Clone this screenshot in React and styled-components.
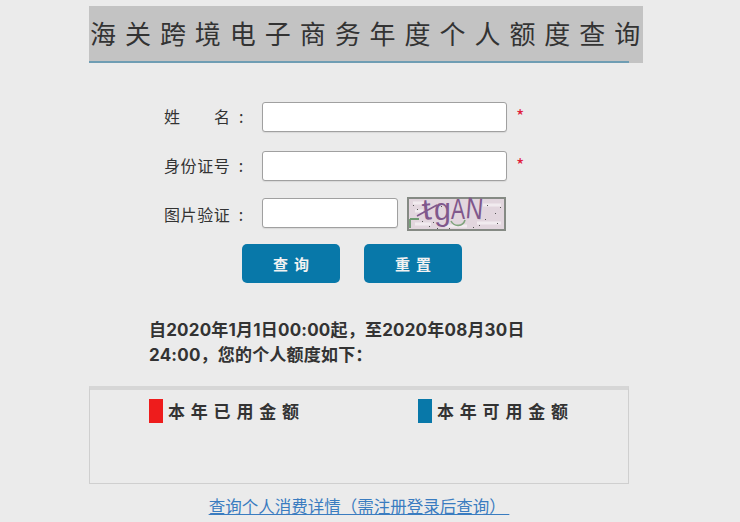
import React from 'react';
import styled, {createGlobalStyle} from 'styled-components';

const GlobalStyle = createGlobalStyle`
  html, body {
    margin: 0;
    padding: 0;
    height: 100%;
    overflow: hidden;
    background: #ebebeb;
    font-family: "Noto Sans CJK SC", "Liberation Sans", sans-serif;
  }
`;

const Page = styled.div`
  width: 540px;
  margin-left: 89px;
  padding-top: 6px;
  isolation: isolate;
`;

const Header = styled.div`
  width: 540px;
  height: 56.5px;
  border-bottom: 2px solid #6f9db3;
  box-sizing: border-box;
`;

const Title = styled.h1`
  width: 554px;
  height: 56.5px;
  margin: 0;
  padding-left: 1px;
  box-sizing: border-box;
  background: #c3c3c3;
  color: #333;
  font-size: 26px;
  font-weight: 400;
  line-height: 54px;
  letter-spacing: 8.95px;
  white-space: nowrap;
  position: relative;
  z-index: -1;
`;

const Form = styled.form`
  display: flex;
  flex-direction: column;
  gap: 19px;
  margin-top: 39.5px;
  padding-left: 75px;
`;

const Row = styled.div`
  display: flex;
  align-items: center;
  height: 30px;
  &:nth-of-type(3) {
    margin-top: -2px;
  }
`;

const Label = styled.label`
  width: 98px;
  display: flex;
  justify-content: ${p => (p.$spread ? 'space-between' : 'flex-start')};
  margin-top: ${p => p.$top ?? -2}px;
  padding-right: 18px;
  box-sizing: border-box;
  color: #333;
  font-size: 16px;
  letter-spacing: 0.6px;
  white-space: pre;
`;

const Input = styled.input`
  width: ${p => p.$w}px;
  height: 30px;
  box-sizing: border-box;
  padding: 0 8px;
  background: #fff;
  border: 1px solid #a0a0a0;
  border-radius: 3px;
  outline: none;
  box-shadow: 0 1px 1px rgba(0, 0, 0, 0.08);
`;

const Star = styled.span`
  margin: -5px 0 0 9px;
  color: #e0203c;
  font-size: 18px;
`;

const Captcha = styled.svg`
  width: 99px;
  height: 34px;
  margin: 2px 0 0 9px;
  display: block;
  overflow: visible;
`;

const Buttons = styled.div`
  display: flex;
  gap: 24px;
  margin: -3px 0 0 78px;
`;

const Button = styled.button`
  width: 98px;
  height: 39px;
  padding: 0 0 0 6px;
  border: none;
  border-radius: 5px;
  background: #0878a9;
  color: #f2f2f2;
  font-family: inherit;
  font-size: 15px;
  font-weight: 700;
  letter-spacing: 6px;
  cursor: pointer;
`;

const Notice = styled.p`
  width: 400px;
  margin: 35px 0 0 60px;
  color: #333;
  font-family: Inter, "Noto Sans CJK SC", sans-serif;
  font-size: 17px;
  font-weight: 700;
  line-height: 25px;
  letter-spacing: 0.2px;
`;

const Summary = styled.div`
  display: flex;
  height: 98px;
  margin-top: 18px;
  box-sizing: border-box;
  padding: 9px 0 0 59px;
  border: 1px solid #cfcfcf;
  border-top: 4px solid #d6d6d6;
`;

const Legend = styled.div`
  display: flex;
  align-items: flex-start;
  flex-shrink: 0;
  gap: 5px;
  width: 269px;
`;

const Swatch = styled.span`
  width: 14px;
  height: 24px;
  background: ${p => p.$color};
`;

const LegendText = styled.span`
  color: #333;
  font-size: 17px;
  font-weight: 700;
  line-height: 24px;
  letter-spacing: 5.8px;
  white-space: nowrap;
`;

const Footer = styled.div`
  margin-top: 9px;
  text-align: center;
`;

const Link = styled.a`
  color: #3a7cc0;
  font-size: 16.5px;
  line-height: 26px;
  text-decoration: underline;
  white-space: pre;
  cursor: pointer;
`;

const CaptchaImage = () => {
    const letter = {fontFamily: 'Liberation Sans', fill: '#80588c'};
    return (
        <Captcha viewBox="0 0 99 34">
            <rect x="1" y="1" width="97" height="32" fill="#e2d6de" stroke="#858a84" strokeWidth="2"/>
            <path d="M6 6h14M38 29h22M70 26h24M76 8h18M8 14h8M8 27h16" stroke="#f1ebef" strokeWidth="3" fill="none"/>
            <path d="M3 22h9M3 22v9" stroke="#6f9a72" strokeWidth="1.8" fill="none"/>
            <path d="M44 24c3 6 12 6 14 -1" stroke="#7fa37c" strokeWidth="1.6" fill="none"/>
            <path d="M10 12l1 1M22 29l1 1M34 9l1 1M42 31l1 1M72 28l1 1M80 8l1 1M88 16l1 1M90 26l1 1M66 30l1 1M15 24l1 1M26 25l1 1M78 22l1 1M93 10l1 1M6 8l1 1M30 31l1 1" stroke="#555" strokeWidth="1"/>
            <path d="M10 19L30 8" stroke="#80588c" strokeWidth="1.6"/>
            <text {...letter} fontSize="30" transform="translate(16 23) rotate(-6) scale(1.1 1)">t</text>
            <text {...letter} fontSize="32" transform="translate(27 23) scale(0.95 1)">g</text>
            <text {...letter} fontSize="30" transform="translate(44 22) scale(0.7 1)">A</text>
            <text {...letter} fontSize="30" transform="translate(58 21) rotate(5) scale(0.8 1)">N</text>
        </Captcha>
    );
};

const App = () => {
    return (
        <>
            <GlobalStyle/>
            <Page>
                <Header>
                    <Title>海关跨境电子商务年度个人额度查询</Title>
                </Header>
                <Form>
                    <Row>
                        <Label $spread><span>姓</span><span>名  :</span></Label>
                        <Input $w={245}/>
                        <Star>*</Star>
                    </Row>
                    <Row>
                        <Label $top={-3}>身份证号  :</Label>
                        <Input $w={245}/>
                        <Star>*</Star>
                    </Row>
                    <Row>
                        <Label $top={2}>图片验证  :</Label>
                        <Input $w={136}/>
                        <CaptchaImage/>
                    </Row>
                    <Buttons>
                        <Button type="button">查询</Button>
                        <Button type="button">重置</Button>
                    </Buttons>
                </Form>
                <Notice>自2020年1月1日00:00起，至2020年08月30日24:00，您的个人额度如下：</Notice>
                <Summary>
                    <Legend>
                        <Swatch $color="#ee1c1c"/>
                        <LegendText>本年已用金额</LegendText>
                    </Legend>
                    <Legend>
                        <Swatch $color="#0878a9"/>
                        <LegendText>本年可用金额</LegendText>
                    </Legend>
                </Summary>
                <Footer>
                    <Link>查询个人消费详情（需注册登录后查询） </Link>
                </Footer>
            </Page>
        </>
    );
};

export default App;
